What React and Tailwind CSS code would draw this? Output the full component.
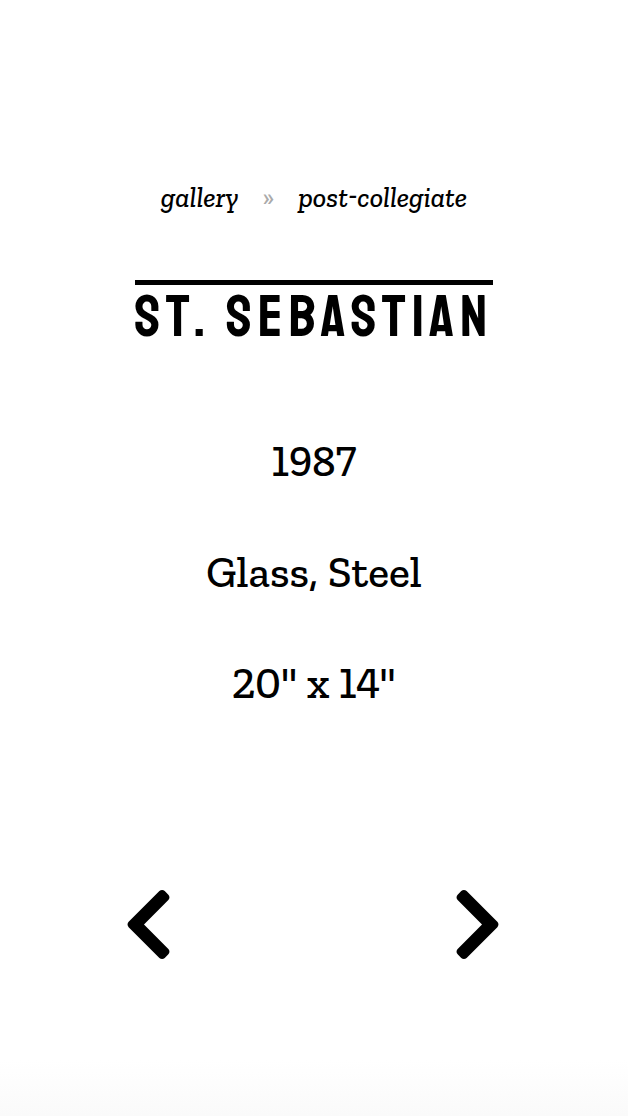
import { FaChevronLeft, FaChevronRight } from 'react-icons/fa';

export default function App() {
  return (
    <div className="flex min-h-screen flex-col bg-linear-to-b from-white from-95% to-[#fafafa] text-black">
      <main className="flex flex-col items-center pt-45 font-['Roboto_Slab','Zilla_Slab','Noto_Serif',serif] font-medium lining-nums">
        <nav aria-label="Breadcrumb" className="flex items-center gap-6 text-[28px] italic leading-9">
          <a href="#gallery">gallery</a>
          <span className="font-['Roboto',sans-serif] text-2xl not-italic text-[#aaaaaa]">»</span>
          <a href="#post-collegiate">post-collegiate</a>
        </nav>
        <h1 className="mt-16 border-t-5 border-black pt-[2px] font-['Staatliches','Bebas_Neue','Roboto_Condensed','Roboto',sans-serif] text-[59px] font-normal uppercase leading-[60px] tracking-[6px]">
          St. Sebastian
        </h1>
        <div className="mt-[82px] flex flex-col gap-12 text-center text-[44px] leading-[63px]">
          <p>1987</p>
          <p>Glass, Steel</p>
          <p>20" x 14"</p>
        </div>
      </main>
      <nav aria-label="Artwork" className="mt-[170px] flex justify-between pr-[110px] pl-27">
        <a href="#previous" aria-label="Previous"><FaChevronLeft className="size-[81px]" /></a>
        <a href="#next" aria-label="Next"><FaChevronRight className="size-[81px]" /></a>
      </nav>
    </div>
  );
}
